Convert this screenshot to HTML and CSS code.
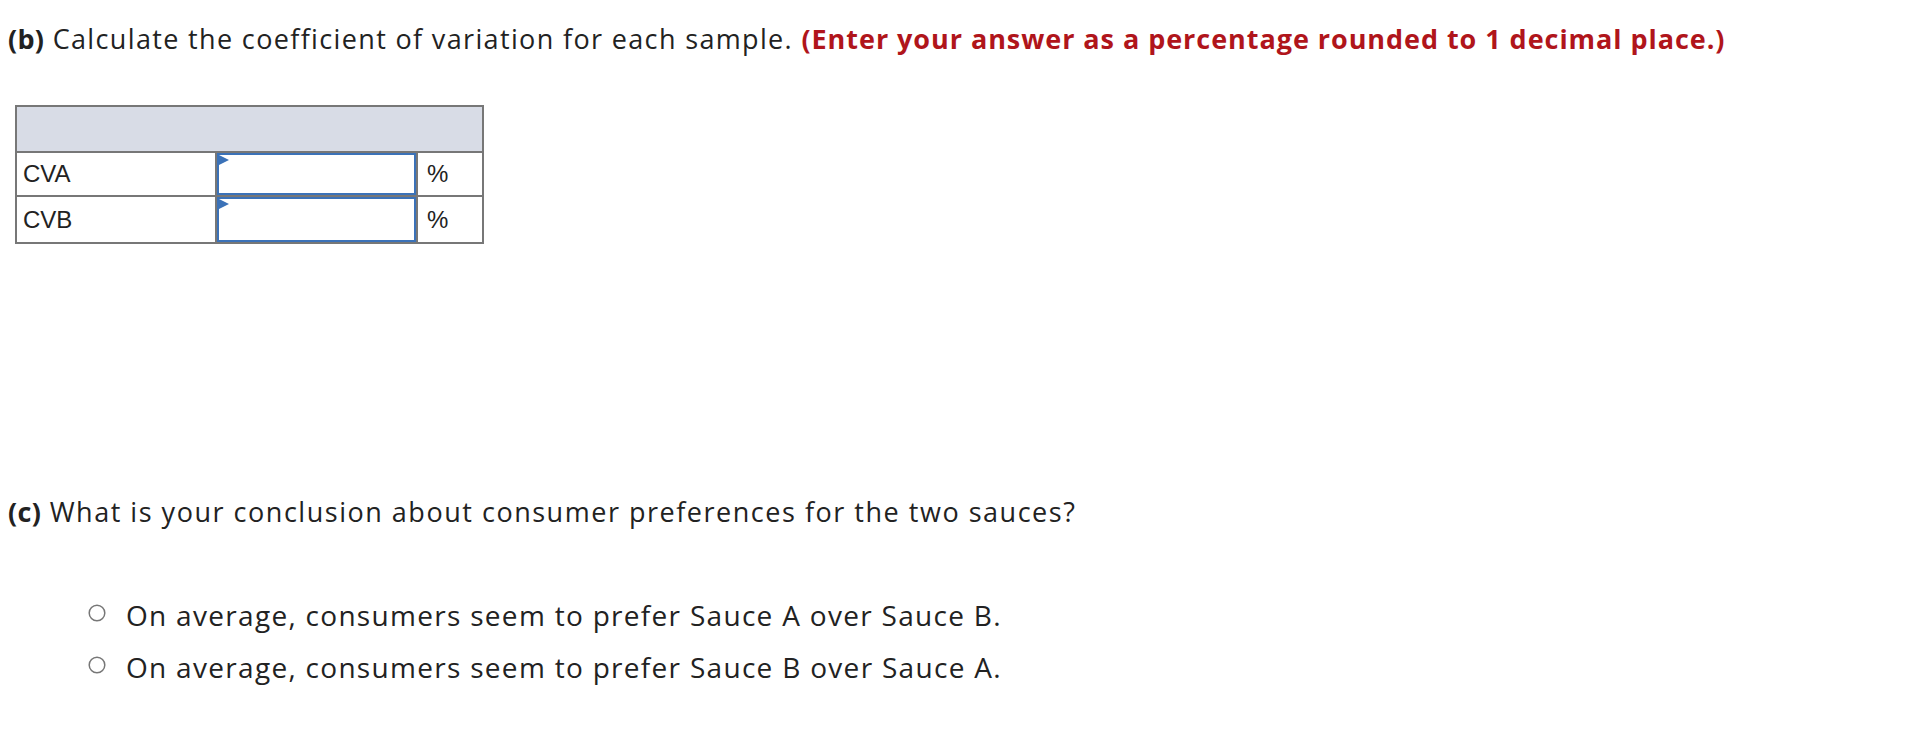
FILE: index.html
```html
<!DOCTYPE html>
<html>
<head>
<meta charset="utf-8">
<link rel="stylesheet" href="styles.css">
</head>
<body>
<div class="page">
  <p class="q q-b"><b>(b)</b> Calculate the coefficient of variation for each sample. <span class="hint">(Enter your answer as a percentage rounded to 1 decimal place.)</span></p>
  <div class="grid">
    <div class="head"></div>
    <div class="cell label">CVA</div>
    <div class="cell inp"><div class="box"><span class="flag"></span></div></div>
    <div class="cell unit">%</div>
    <div class="cell label">CVB</div>
    <div class="cell inp"><div class="box"><span class="flag"></span></div></div>
    <div class="cell unit">%</div>
  </div>
  <p class="q q-c"><b>(c)</b> What is your conclusion about consumer preferences for the two sauces?</p>
  <ul class="opts">
    <li><svg class="radio" width="18" height="18" viewBox="0 0 18 18"><circle cx="9" cy="9" r="7.8" fill="#fff" stroke="#777" stroke-width="1.5"/></svg>On average, consumers seem to prefer Sauce A over Sauce B.</li>
    <li><svg class="radio" width="18" height="18" viewBox="0 0 18 18"><circle cx="9" cy="9" r="7.8" fill="#fff" stroke="#777" stroke-width="1.5"/></svg>On average, consumers seem to prefer Sauce B over Sauce A.</li>
  </ul>
</div>
</body>
</html>
```

FILE: styles.css
```css
html, body { margin: 0; padding: 0; background: #fff; }
body { font-family: "Open Sans", "Liberation Sans", sans-serif; color: #222; }
.page { padding: 0 8px; }
.q { margin: 0; font-size: 27px; line-height: 32px; letter-spacing: 1.35px; }
.q b { font-weight: 700; letter-spacing: 0.3px; }
.q-b { padding-top: 23px; }
.hint { color: #b0151b; font-weight: 700; letter-spacing: 0.95px; }
.grid {
  display: grid;
  grid-template-columns: 198px 199px 64px;
  grid-template-rows: 44px 42px 45px;
  gap: 2px;
  padding: 2px;
  width: max-content;
  background: #777;
  margin: 50px 0 0 7px;
  font-family: "Liberation Sans", Arial, sans-serif;
  font-size: 24px;
  letter-spacing: 0;
  color: #222;
}
.head { grid-column: 1 / 4; background: #d8dce6; }
.cell { background: #fff; display: flex; align-items: center; }
.label { padding-left: 6px; }
.unit { padding-left: 9px; }
.box {
  position: relative;
  width: 100%;
  height: 100%;
  box-sizing: border-box;
  border: 2px solid #3b72b8;
}
.flag {
  position: absolute;
  left: 0; top: 0;
  width: 0; height: 0;
  border-top: 5px solid transparent;
  border-bottom: 5px solid transparent;
  border-left: 10px solid #3b72b8;
}
.q-c { margin-top: 252px; letter-spacing: 1.52px; }
.opts { list-style: none; margin: 61px 0 0 0; padding: 0 0 0 80px; font-size: 28px; letter-spacing: 1.3px; }
.opts li { display: flex; align-items: center; height: 52px; }
.radio { flex: none; margin-right: 20px; position: relative; top: -2px; }
```
